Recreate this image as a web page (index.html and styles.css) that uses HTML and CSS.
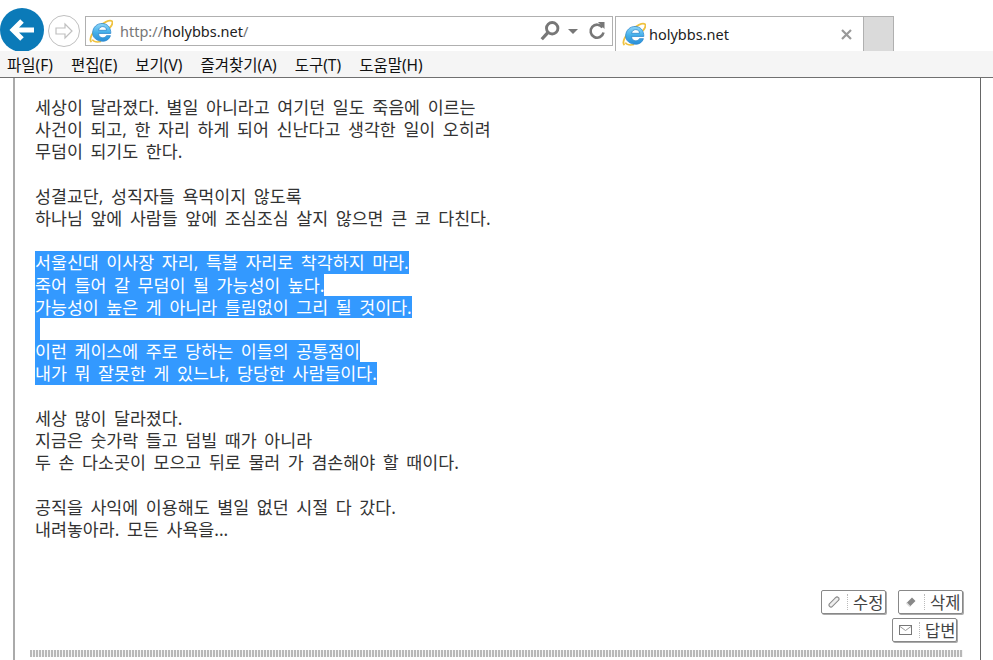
FILE: index.html
```html
<!DOCTYPE html>
<html lang="ko">
<head>
    <meta charset="UTF-8">
    <meta name="viewport" content="width=device-width, initial-scale=1.0">
    <title>holybbs.net</title>
    <link rel="stylesheet" href="styles.css">
</head>
<body>
    <svg class="defs" width="0" height="0">
        <defs>
            <linearGradient id="ie-fill" x1="0" y1="0" x2="0" y2="1">
                <stop offset="0" stop-color="#8fd6f7"/>
                <stop offset="0.5" stop-color="#45b0ea"/>
                <stop offset="1" stop-color="#2a8fd8"/>
            </linearGradient>
            <g id="ie-logo">
                <path d="M2.200 21.300c-2.600-2.400.6-9.800 7.800-15.200 5-3.700 9.400-5.600 11-4.100 1.200 1.100-.2 4-2 6.200" fill="none" stroke="#efc23f" stroke-width="1.700"/>
                <path d="M3 19c1.200 1.800 4.500 2.600 8 1.800" fill="none" stroke="#efc23f" stroke-width="1.400"/>
                <path d="M3.300 12.500C3.600 7.400 7.400 4.100 12 4.100c4.900 0 8.200 3.800 8 9.200H8.700c.2 2.600 1.700 4 3.900 4 1.600 0 2.800-.7 3.400-2h3.700c-.9 3.200-3.700 5.200-7.200 5.200-4.900 0-9.500-3.200-9.200-8zM8.800 10.400h7.300c-.1-2.100-1.500-3.400-3.500-3.400s-3.500 1.300-3.800 3.400z" fill="url(#ie-fill)" stroke="#2a86cc" stroke-width=".7"/>
            </g>
        </defs>
    </svg>
    <div class="toolbar">
        <div class="back">
            <svg width="28" height="24" viewBox="0 0 28 24"><path d="M26 12H6M14 3l-9 9 9 9" fill="none" stroke="#fff" stroke-width="5"/></svg>
        </div>
        <div class="forward">
            <svg width="20" height="18" viewBox="0 0 20 18"><path d="M2 6h9V2l7 7-7 7v-4H2z" fill="#fff" stroke="#c0c0c0" stroke-width="1.200"/></svg>
        </div>
        <div class="address">
            <svg class="ie" width="24" height="25" viewBox="0 0 22 23"><use href="#ie-logo"/></svg>
            <span class="url"><span class="url-dim">http://</span>holybbs.net<span class="url-dim">/</span></span>
            <svg class="search" width="22" height="22" viewBox="0 0 20 20"><circle cx="12" cy="7.500" r="5.200" fill="none" stroke="#777" stroke-width="2.600"/><path d="M8 11.500L2.500 17.500" stroke="#777" stroke-width="3"/></svg>
            <span class="caret"></span>
            <svg class="refresh" width="18" height="20" viewBox="0 0 18 20"><path d="M14.500 6.500a6.500 6.500 0 1 0 1 5" fill="none" stroke="#777" stroke-width="2.600"/><path d="M10 1l6.500 0v7z" fill="#777"/></svg>
        </div>
        <div class="tab">
            <svg class="ie" width="24" height="25" viewBox="0 0 22 23"><use href="#ie-logo"/></svg>
            <span class="tab-title">holybbs.net</span>
            <svg class="tab-close" width="11" height="11" viewBox="0 0 11 11"><path d="M1 1l9 9M10 1l-9 9" stroke="#999" stroke-width="2.200"/></svg>
        </div>
        <div class="new-tab"></div>
    </div>
    <div class="menubar">
        <span>파일(F)</span>
        <span>편집(E)</span>
        <span>보기(V)</span>
        <span>즐겨찾기(A)</span>
        <span>도구(T)</span>
        <span>도움말(H)</span>
    </div>
    <div class="page">
        <div class="article">
            <p>세상이 달라졌다. 별일 아니라고 여기던 일도 죽음에 이르는</p>
            <p>사건이 되고, 한 자리 하게 되어 신난다고 생각한 일이 오히려</p>
            <p>무덤이 되기도 한다.</p>
            <p>&nbsp;</p>
            <p>성결교단, 성직자들 욕먹이지 않도록</p>
            <p>하나님 앞에 사람들 앞에 조심조심 살지 않으면 큰 코 다친다.</p>
            <p>&nbsp;</p>
            <p class="sel">서울신대 이사장 자리, 특볼 자리로 착각하지 마라.</p>
            <p class="sel">죽어 들어 갈 무덤이 될 가능성이 높다.</p>
            <p class="sel">가능성이 높은 게 아니라 틀림없이 그리 될 것이다.</p>
            <p class="sel blank">&nbsp;</p>
            <p class="sel">이런 케이스에 주로 당하는 이들의 공통점이</p>
            <p class="sel">내가 뭐 잘못한 게 있느냐, 당당한 사람들이다.</p>
            <p>&nbsp;</p>
            <p>세상 많이 달라졌다.</p>
            <p>지금은 숫가락 들고 덤빌 때가 아니라</p>
            <p>두 손 다소곳이 모으고 뒤로 물러 가 겸손해야 할 때이다.</p>
            <p>&nbsp;</p>
            <p>공직을 사익에 이용해도 별일 없던 시절 다 갔다.</p>
            <p>내려놓아라. 모든 사욕을...</p>
        </div>
        <div class="actions">
            <div class="btn-row">
                <span class="btn">
                    <svg width="12" height="12" viewBox="0 0 12 12"><path d="M3 9L9 3" stroke="#888" stroke-width="5" stroke-linecap="round"/><path d="M3 9L9 3" stroke="#eee" stroke-width="3" stroke-linecap="round"/></svg>
                    <i></i>수정
                </span>
                <span class="btn">
                    <svg width="12" height="12" viewBox="0 0 12 12"><path d="M1.500 7L7 1.500l3.500 3.500L5 10.500z" fill="#888"/><path d="M1.500 7l3.500 3.500" stroke="#ddd" stroke-width="1.500"/></svg>
                    <i></i>삭제
                </span>
            </div>
            <div class="btn-row reply-row">
                <span class="btn">
                    <svg width="13" height="10" viewBox="0 0 13 10"><rect x=".5" y=".5" width="12" height="9" fill="#fff" stroke="#777"/><path d="M1 1.500l5.500 4 5.500-4" fill="none" stroke="#999"/></svg>
                    <i></i>답변
                </span>
            </div>
        </div>
        <div class="dots"></div>
    </div>
</body>
</html>
```

FILE: styles.css
```css
html, body {
    margin: 0;
    height: 100%;
    overflow: hidden;
}

body {
    background-color: #fff;
    font-family: "Noto Sans", "Noto Sans CJK KR", sans-serif;
    color: #222;
}

.defs {
    display: block;
    height: 0;
}

.toolbar {
    height: 51px;
    display: flex;
    align-items: flex-start;
    box-sizing: border-box;
    padding-top: 8px;
    overflow: hidden;
}

.back {
    width: 44px;
    height: 44px;
    margin-right: 4px;
    flex: none;
    border-radius: 50%;
    background-color: #0b7ab8;
    display: flex;
    align-items: center;
    justify-content: center;
}

.forward {
    width: 32px;
    height: 32px;
    margin-top: 7px;
    margin-right: 5px;
    flex: none;
    box-sizing: border-box;
    border: 1px solid #c0c0c0;
    border-radius: 50%;
    display: flex;
    align-items: center;
    justify-content: center;
}

.address {
    width: 528px;
    height: 30px;
    margin-top: 8px;
    flex: none;
    box-sizing: border-box;
    border: 1px solid #b0b0b0;
    display: flex;
    align-items: center;
    padding: 0 6px 0 3px;
}

.url {
    margin-left: 7px;
    font-size: 14.5px;
    flex: 1;
}

.url-dim {
    color: #777;
}

.search {
    margin-right: 0;
}

.caret {
    width: 0;
    height: 0;
    margin: 0 10px 0 7px;
    border-left: 5px solid transparent;
    border-right: 5px solid transparent;
    border-top: 5px solid #777;
}

.tab {
    width: 249px;
    height: 35px;
    margin-top: 8px;
    margin-left: 2px;
    flex: none;
    box-sizing: border-box;
    border: 1px solid #b0b0b0;
    border-bottom: none;
    display: flex;
    align-items: center;
    padding: 0 11px 0 6px;
}

.tab-title {
    margin-left: 3px;
    font-size: 14.5px;
    flex: 1;
    color: #222;
}

.new-tab {
    width: 30px;
    height: 35px;
    margin-top: 8px;
    flex: none;
    box-sizing: border-box;
    border: 1px solid #b0b0b0;
    border-left: none;
    border-bottom: none;
    background-color: #dadada;
}

.menubar {
    height: 27px;
    box-sizing: border-box;
    background-color: #f5f5f5;
    border-bottom: 1px solid #707070;
    display: flex;
    align-items: center;
    padding: 0 0 0 7px;
    gap: 18px;
    font-size: 15.5px;
    color: #111;
}

.page {
    height: 582px;
    margin-left: 13px;
    width: 968px;
    box-sizing: border-box;
    border-left: 2px solid #aaa;
    border-right: 1px solid #666;
    padding: 18px 17px 0 15px;
}

.article {
    padding-left: 5px;
    font-size: 17.33px;
    line-height: 22.2px;
    word-spacing: 3.1px;
    color: #333;
}

.article p {
    margin: 0;
    width: fit-content;
}

.article .sel {
    background-color: #3399ff;
    color: #fff;
}

.article .blank {
    width: 5px;
    overflow: hidden;
}

.actions {
    margin-top: 50px;
    display: flex;
    flex-direction: column;
    align-items: flex-end;
}

.btn-row {
    display: flex;
    gap: 12px;
}

.reply-row {
    margin-top: 4px;
    padding-right: 6px;
}

.btn {
    width: 65px;
    height: 24px;
    box-sizing: border-box;
    border: 1px solid #888;
    border-radius: 2px;
    box-shadow: 1px 1px 0 #aaa;
    background-color: #fff;
    display: flex;
    align-items: center;
    padding-left: 6px;
    font-size: 16.5px;
    color: #444;
}

.btn i {
    height: 16px;
    margin: 0 5px 0 7px;
    border-left: 1px dotted #bbb;
}

.dots {
    height: 7px;
    margin-top: 8px;
    background-image: repeating-linear-gradient(90deg, #b8b8b8 0, #b8b8b8 2px, #f4f4f4 2px, #f4f4f4 3px);
}
```
